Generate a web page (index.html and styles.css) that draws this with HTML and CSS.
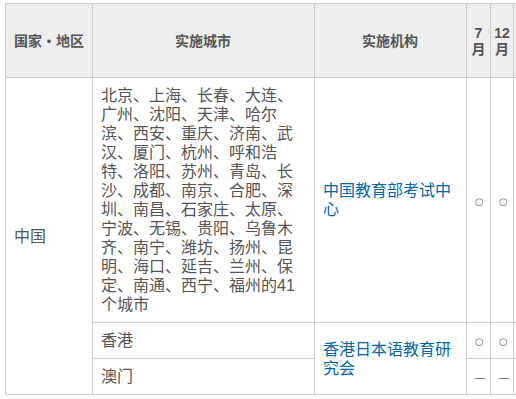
FILE: index.html
```html
<!DOCTYPE html>
<html lang="zh-CN">
<head>
<meta charset="utf-8">
<title>实施城市</title>
<link rel="stylesheet" href="styles.css">
</head>
<body>
<div class="wrap">
<table class="exam">
<colgroup>
<col class="c1"><col class="c2"><col class="c3"><col class="c4"><col class="c5"><col class="c6">
</colgroup>
<thead>
<tr class="head">
<th class="nowrap">国家・地区</th>
<th>实施城市</th>
<th>实施机构</th>
<th class="narrow">7月</th>
<th class="narrow">12月</th>
<th></th>
</tr>
</thead>
<tbody>
<tr class="r1">
<td rowspan="3" class="country">中国</td>
<td class="cities">北京、上海、长春、大连、广州、沈阳、天津、哈尔滨、西安、重庆、济南、武汉、厦门、杭州、呼和浩特、洛阳、苏州、青岛、长沙、成都、南京、合肥、深圳、南昌、石家庄、太原、宁波、无锡、贵阳、乌鲁木齐、南宁、潍坊、扬州、昆明、海口、延吉、兰州、保定、南通、西宁、福州的41个城市</td>
<td class="org"><a href="#">中国教育部考试中心</a></td>
<td class="mark"><span class="circle">○</span></td>
<td class="mark"><span class="circle">○</span></td>
<td></td>
</tr>
<tr class="r2">
<td class="cities">香港</td>
<td rowspan="2" class="org"><a href="#">香港日本语教育研究会</a></td>
<td class="mark"><span class="circle">○</span></td>
<td class="mark"><span class="circle">○</span></td>
<td></td>
</tr>
<tr class="r3">
<td class="cities">澳门</td>
<td class="mark"><span class="dash">—</span></td>
<td class="mark"><span class="dash">—</span></td>
<td></td>
</tr>
</tbody>
</table>
</div>
</body>
</html>
```
FILE: styles.css
```css
html, body {
  margin: 0;
  padding: 0;
  background: #ffffff;
  overflow: hidden;
}
body {
  font-family: "Liberation Sans", "Noto Sans CJK SC", sans-serif;
  font-size: 16px;
  color: #555555;
}
.wrap {
  padding: 3px 0 0 5px;
}
.exam {
  border-collapse: collapse;
  table-layout: fixed;
  width: 568px;
}
.c1 { width: 87px; }
.c2 { width: 222px; }
.c3 { width: 152px; }
.c4 { width: 24px; }
.c5 { width: 23px; }
.c6 { width: 60px; }
.exam th,
.exam td {
  border: 1px solid #cccccc;
  padding: 8px 9px 8px 8px;
  vertical-align: middle;
  line-height: 19px;
}
.head th {
  height: 57px;
  background: #eeeeee;
  font-size: 14px;
  font-weight: bold;
  color: #555555;
  text-align: center;
  line-height: 16px;
}
.head th.nowrap {
  white-space: nowrap;
  padding-left: 2px;
  padding-right: 2px;
}
.head th.narrow {
  padding: 8px 1px;
}
.country {
  text-align: left;
  padding-left: 9px;
}
.cities {
  text-align: left;
}
.r1 td.cities {
  vertical-align: top;
}
.org a {
  color: #0066aa;
  text-decoration: none;
}
.mark {
  text-align: center;
  padding-left: 1px;
  padding-right: 1px;
}
.circle {
  font-family: "DejaVu Sans", sans-serif;
  font-size: 10px;
  line-height: 10px;
  vertical-align: middle;
  color: #666666;
}
.dash {
  font-size: 10px;
  line-height: 10px;
  vertical-align: middle;
  color: #555555;
}
.r2 td, .r3 td {
  height: 19px;
}
```
